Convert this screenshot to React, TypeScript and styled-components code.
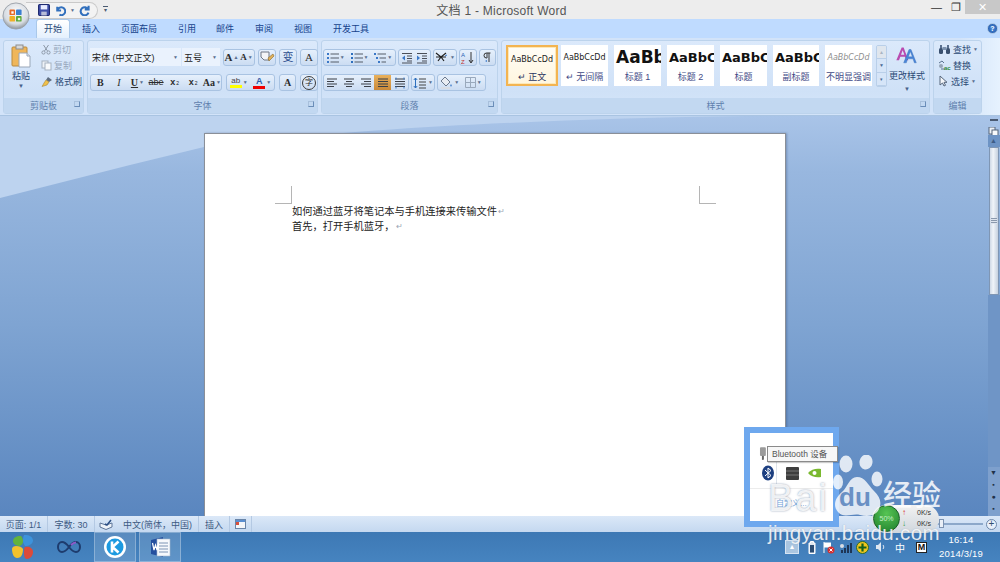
import React from 'react';
import styled, { createGlobalStyle } from 'styled-components';

const Global = createGlobalStyle`
  html, body { margin: 0; padding: 0; width: 1000px; height: 562px; overflow: hidden; }
  body { font-family: "Liberation Sans", "Noto Sans CJK SC", sans-serif; }
  * { box-sizing: border-box; }
`;

const Screen = styled.div`position: relative; width: 1000px; height: 562px; overflow: hidden; display: flex; flex-direction: column;`;
const TitleBar = styled.div`height: 19px; background: #ededed; display: grid; grid-template-columns: 1fr auto 1fr; align-items: center;`;
const Qat = styled.div`display: flex; align-items: center; height: 17px; margin: 1px 0 0 26px; padding-left: 12px; gap: 4px; width: 72px; border: 1px solid #c9c9c9; border-left: 0; border-radius: 0 10px 10px 0; background: #f3f3f3;`;
const QatMore = styled.span`width: 5px; margin-left: 5px; border-top: 1px solid #4a5a70; font-size: 6px; color: #4a5a70; line-height: 7px; text-align: center;`;
const QatWrap = styled.div`display: flex; align-items: center;`;
const Title = styled.div`font-size: 12px; color: #555; letter-spacing: .25px; padding-left: 3px;`;
const WinBtns = styled.div`display: flex; justify-content: flex-end; align-items: flex-start; height: 19px;`;
const WinBtn = styled.div<{ $w: number; $close?: boolean }>`
  width: ${p => p.$w}px; height: 14px; display: flex; align-items: center; justify-content: center;
  background: ${p => (p.$close ? '#c8c8c8' : 'transparent')}; color: ${p => (p.$close ? '#fff' : '#333')}; font-size: 11px;`;

const TabBar = styled.div`height: 19px; background: #bfdbff; display: flex; align-items: flex-end; padding-left: 36px; position: relative;`;
const Tab = styled.div<{ $w: number; $on?: boolean }>`
  width: ${p => p.$w}px; height: ${p => (p.$on ? 19 : 18)}px; line-height: 18px; text-align: center; font-size: 9px; color: #15428b;
  ${p => p.$on ? 'background: linear-gradient(#fff, #e4f0fd); border: 1px solid #a9c8ea; border-bottom: 0; border-radius: 3px 3px 0 0; color:#2a4a78;' : ''}`;
const Help = styled.div`position: absolute; right: 2px; top: 4px; width: 11px; height: 11px; border-radius: 50%; background: radial-gradient(#4d8fe0, #1c4f9f); border: 1px solid #a8c4e4; color: #fff; font-size: 7px; line-height: 9px; text-align: center; font-weight: bold;`;

const Ribbon = styled.div`height: 78px; background: linear-gradient(90deg, #d2e3f9 0 96%, #e6f2fe 100%); display: flex; padding: 2px 0 2px 3px; gap: 3px; border-bottom: 1px solid #a9c4e2;`;
const Group = styled.div<{ $w: number }>`
  width: ${p => p.$w}px; height: 74px; display: flex; flex-direction: column; border: 1px solid #bcd3ec; border-radius: 3px;
  background: linear-gradient(#dbe9fb, #cfe1f7 70%, #d6e6fa); position: relative;`;
const GroupBody = styled.div`height: 58px; display: flex; position: relative;`;
const GroupLabel = styled.div`height: 15px; background: #c2d8f1; color: #5f80ad; font-size: 9px; line-height: 16px; text-align: center; position: relative;`;
const Launcher = styled.span`position: absolute; right: 3px; top: 3px; width: 6px; height: 6px; border: 1px solid #6a8db8; border-top-color: #a8c0dc; border-left-color: #a8c0dc;`;

const Stack = styled.div<{ $gap: number; $top: number; $left: number }>`display: flex; flex-direction: column; gap: ${p => p.$gap}px; padding: ${p => p.$top}px 0 0 ${p => p.$left}px;`;
const Row = styled.div<{ $gap?: number }>`display: flex; align-items: center; gap: ${p => p.$gap ?? 2}px;`;

const Paste = styled.div`width: 34px; padding-top: 3px; display: flex; flex-direction: column; align-items: center; font-size: 9px; line-height: 12px; color: #2b4a75; gap: 1px;`;
const Arrow = styled.span`font-size: 6px; color: #46618a; line-height: 1;`;
const SmallCmd = styled.div<{ $dim?: boolean }>`display: flex; align-items: center; gap: 2px; height: 16px; font-size: 9px; color: ${p => (p.$dim ? '#98a8bd' : '#2b4a75')}; white-space: nowrap;`;

const Combo = styled.div<{ $w: number }>`width: ${p => p.$w}px; height: 18px; background: #eaf2fd; display: flex; align-items: center; justify-content: space-between; padding: 0 3px 0 2px; font-size: 9px; color: #222; white-space: nowrap;`;
const ComboJoin = styled.div`display: flex; gap: 1px;`;
const BtnGroup = styled.div<{ $w: number }>`width: ${p => p.$w}px; height: 17px; border: 1px solid #a9c3e2; border-radius: 3px; background: linear-gradient(#e6f0fc, #cbdcf2); display: flex; align-items: center; justify-content: space-around; font-size: 10px; color: #222; overflow: hidden;`;
const Cell = styled.span<{ $on?: boolean }>`
  flex: 1; height: 100%; display: flex; align-items: center; justify-content: center; gap: 1px;
  ${p => p.$on ? 'background: linear-gradient(#e8b05c, #c9893a);' : ''}`;
const Letter = styled.span<{ $b?: boolean; $i?: boolean; $u?: boolean; $s?: boolean; $size?: number; $c?: string; $serif?: boolean }>`
  font-family: ${p => (p.$serif ? '"Liberation Serif", serif' : '"Liberation Sans", "Noto Sans CJK SC", sans-serif')};
  font-weight: ${p => (p.$b ? 700 : 400)}; font-style: ${p => (p.$i ? 'italic' : 'normal')};
  text-decoration: ${p => (p.$u ? 'underline' : p.$s ? 'line-through' : 'none')};
  font-size: ${p => p.$size ?? 10}px; color: ${p => p.$c ?? '#2c2c2c'}; line-height: 1;`;
const Circled = styled.span`width: 14px; height: 14px; border: 1px solid #3a3a3a; border-radius: 50%; font-size: 8px; line-height: 12px; text-align: center; color: #2c2c2c;`;
const Drop = styled.span`font-size: 5px; color: #5a6f8f; line-height: 1;`;
const Sub = styled.sub`font-size: 5px;`;
const Sup = styled.sup`font-size: 5px;`;
const ColorBar = styled.span<{ $c: string }>`display: block; width: 12px; height: 3px; background: ${p => p.$c};`;
const ColorIcon = styled.span`display: flex; flex-direction: column; align-items: center; line-height: 1;`;

const Gallery = styled.div`display: flex; padding: 4px 0 0 4px; gap: 0;`;
const StyleTile = styled.div<{ $w: number; $gap: number; $on?: boolean }>`
  width: ${p => p.$w}px; height: 41px; margin-right: ${p => p.$gap}px; background: #fff; display: flex; flex-direction: column; align-items: center; overflow: hidden;
  ${p => p.$on ? 'border: 2px solid #f3b451; box-shadow: inset 0 0 0 1px #fde8b8; background: linear-gradient(#fffdf6,#fff6df);' : ''}`;
const Sample = styled.div<{ $size: number; $b?: boolean; $i?: boolean; $c?: string }>`
  height: 25px; line-height: 25px; font-size: ${p => p.$size}px; font-weight: ${p => (p.$b ? 700 : 400)}; font-style: ${p => (p.$i ? 'italic' : 'normal')};
  color: ${p => p.$c ?? '#111'}; white-space: nowrap; font-family: "DejaVu Sans", sans-serif; width: 100%; overflow: hidden; text-align: ${p => (p.$b ? 'left' : 'center')}; padding-left: ${p => (p.$b ? 2 : 0)}px;`;
const StyleName = styled.div<{ $c?: string }>`font-size: 9px; line-height: 14px; color: ${p => p.$c ?? '#3f4a86'}; white-space: nowrap;`;
const Spin = styled.div`width: 11px; height: 42px; display: flex; flex-direction: column; border: 1px solid #b9cfe9; border-radius: 2px; margin-left: 4px; overflow: hidden;`;
const SpinBtn = styled.div<{ $dim?: boolean }>`flex: 1; display: flex; align-items: center; justify-content: center; font-size: 5px; color: ${p => (p.$dim ? '#aab5c3' : '#4a6a94')}; background: ${p => (p.$dim ? '#dfe6ee' : '#d6e5f8')}; border-bottom: 1px solid #b9cfe9;`;
const BigCmd = styled.div`width: 40px; display: flex; flex-direction: column; align-items: center; gap: 4px; font-size: 9px; color: #2b4a75; white-space: nowrap; line-height: 12px;`;

const EditRow = styled.div`display: flex; align-items: center; gap: 2px; height: 16px; font-size: 9px; color: #2b4a75; white-space: nowrap;`;

const DocArea = styled.div`flex: 1; position: relative; display: flex; padding-left: 204px; overflow: hidden; background: linear-gradient(#a9c4e8 0, #98b7df 14%, #7fa4d2 52%, #5a86bf 100%);`;
const Swoosh = styled.svg`position: absolute; left: 0; top: 0; width: 1000px; height: 400px;`;
const Page = styled.div`position: relative; width: 582px; height: 400px; margin-top: 17px; background: #fff; border: 1px solid #8a8f98; border-bottom: 0; padding: 69px 0 0 87px; box-shadow: 1px 0 2px rgba(40,60,100,.35);`;
const Line = styled.div`font-family: "Noto Sans CJK SC", sans-serif; font-size: 10.25px; line-height: 15px; height: 15px; color: #222; white-space: nowrap; display: flex; align-items: center;`;
const Para = styled.span`color: #9aa5b5; font-size: 8px; margin-left: 1px;`;
const Crop = styled.span<{ $x: number }>`position: absolute; top: 52px; left: ${p => p.$x}px; width: 17px; height: 18px; border: 0 solid #b5b5b5;`;
const CropL = styled(Crop)`border-right-width: 1px; border-bottom-width: 1px;`;
const CropR = styled(Crop)`border-left-width: 1px; border-bottom-width: 1px;`;

const Scroll = styled.div`position: absolute; right: 0; top: 0; width: 13px; height: 400px; display: flex; flex-direction: column; align-items: center;`;
const Ruler = styled.div`width: 8px; height: 2px; background: #4a5a72; margin-top: 3px;`;
const RulerIcon = styled.div`width: 11px; height: 10px; margin-top: 2px;`;
const ScrollTop = styled.div`width: 12px; height: 12px; margin-top: 2px; background: #6d93c4; color: #3e5c86; font-size: 7px; text-align: center; line-height: 12px;`;
const Thumb = styled.div`width: 10px; height: 148px; border: 1px solid #7f96b4; background: linear-gradient(90deg, #cfd9e6, #f0f4f9 40%, #c5d0de); display: flex; align-items: center; justify-content: center;`;
const Grip = styled.div`width: 6px; height: 6px; background: repeating-linear-gradient(#8a98ac 0 1px, #dde4ee 1px 2px);`;
const Track = styled.div`flex: 1; width: 12px; background: #6f95c6;`;
const ScrollFoot = styled.div`width: 12px; display: flex; flex-direction: column; align-items: center; font-size: 7px; color: #22324a; line-height: 12px; background: #7ea0cd; padding-bottom: 1px;`;

const Status = styled.div`height: 16px; background: linear-gradient(#dbe8f8, #c4d8f0); display: flex; align-items: center; font-size: 9px; color: #3d5a83; position: relative;`;
const StatusCell = styled.div<{ $w: number; $plain?: boolean }>`width: ${p => p.$w}px; height: 100%; display: flex; align-items: center; justify-content: center; border-right: ${p => (p.$plain ? 0 : 1)}px solid #b4c9e3; white-space: nowrap;`;
const StatusSpacer = styled.div`flex: 1;`;
const Zoom = styled.div`width: 46px; height: 2px; background: #8ca8ca; margin-right: 3px; position: relative;`;
const ZoomThumb = styled.span`position: absolute; left: 2px; top: -4px; width: 5px; height: 9px; background: #e9eff7; border: 1px solid #7c93b2;`;
const ZoomPlus = styled.div`width: 11px; height: 11px; margin-right: 3px; border-radius: 50%; border: 1px solid #6d88ab; background: #e8f0fa; font-size: 10px; line-height: 8px; text-align: center; color: #33506f;`;

const Taskbar = styled.div`height: 30px; background: linear-gradient(#3d78b4, #4684c0); display: flex; align-items: center; position: relative;`;
const StartBox = styled.div`width: 44px; display: flex; justify-content: center;`;
const TaskItem = styled.div<{ $w: number; $open?: boolean }>`
  width: ${p => p.$w}px; height: 30px; margin-right: ${p => (p.$open ? 3 : 0)}px; display: flex; align-items: center; justify-content: center;
  ${p => p.$open ? 'background: rgba(255,255,255,.14); border: 1px solid rgba(255,255,255,.28);' : ''}`;
const Tray = styled.div`margin-left: auto; display: flex; align-items: center; height: 30px; padding-right: 10px;`;
const TrayUp = styled.div`width: 14px; height: 14px; margin-right: 4px; background: rgba(255,255,255,.55); border: 1px solid #d6e4f3; font-size: 7px; line-height: 11px; text-align: center; color: #fff;`;
const TrayIcon = styled.div<{ $w: number }>`width: ${p => p.$w}px; display: flex; justify-content: center; align-items: center; color: #fff; font-size: 10px;`;
const MBadge = styled.span`width: 11px; height: 11px; background: #fff; color: #111; border: 1px solid #222; font-size: 9px; line-height: 9px; text-align: center; font-weight: 700;`;
const Clock = styled.div`width: 58px; text-align: center; color: #fff; font-size: 9.5px; line-height: 14px; letter-spacing: .2px;`;

const Popup = styled.div`position: absolute; left: 744px; top: 427px; width: 95px; height: 100px; border: 6px solid #6ea8ee; background: #fff; padding: 11px 0 0 9px;`;
const PopRow = styled.div<{ $h: number }>`display: flex; align-items: center; gap: 9px; height: ${p => p.$h}px;`;
const PopCell = styled.div<{ $line?: boolean }>`width: 18px; height: 22px; display: flex; align-items: center; justify-content: center; border-right: ${p => (p.$line ? 1 : 0)}px solid #dde3ea;`;
const PopDot = styled.span`width: 9px; height: 9px; border-radius: 50%; background: #3d9ad8;`;
const PopLink = styled.div`margin: 4px 0 0 -9px; border-top: 1px solid #ececec; padding: 8px 0 0 26px; font-size: 8px; color: #6f9fd8;`;
const Tip = styled.div`position: absolute; left: 767px; top: 446px; width: 71px; height: 16px; background: #f7f7f7; border: 1px solid #8a8a8a; font-size: 8.5px; line-height: 14px; padding-left: 4px; color: #555; white-space: nowrap; box-shadow: 1px 1px 1px rgba(0,0,0,.2);`;
const OrbWrap = styled.div`position: absolute; left: 2px; top: 2px; width: 30px; height: 30px;`;

const Speed = styled.div`position: absolute; left: 872px; top: 505px; width: 67px; height: 28px; border-radius: 14px; background: linear-gradient(#f2f2f2, #cfd6dd); font-size: 7px; color: #333;`;
const SpeedOrb = styled.div`position: absolute; left: 1px; top: 0; width: 27px; height: 27px; border-radius: 50%; background: radial-gradient(circle at 50% 30%, #56c453, #1e7f2c); border: 1px solid #1a5f26; color: #c4f0c4; font-size: 7px; line-height: 25px; text-align: center;`;
const SpeedText = styled.div<{ $t: number; $c: string }>`position: absolute; left: 30px; top: ${p => p.$t}px; display: flex; gap: 11px; line-height: 10px; & b { color: ${p => p.$c}; font-size: 8px; }`;

const Watermark = styled.div`position: absolute; left: 768px; top: 455px; width: 232px; height: 107px; pointer-events: none; color: rgba(255,255,255,.85);`;
const WmTop = styled.div`display: flex; align-items: flex-end; height: 65px;`;
const WmBai = styled.span`width: 65px; font-family: "Liberation Sans", sans-serif; font-size: 38px; line-height: 44px; letter-spacing: 2px; text-shadow: 0 0 2px rgba(100,120,150,.75);`;
const WmPaw = styled.span`position: relative; width: 50px; height: 65px; display: block; flex: none;`;
const WmDu = styled.span`position: absolute; left: 6px; top: 28px; font-family: "Liberation Sans", sans-serif; font-size: 26px; line-height: 28px; font-weight: 700; color: #6a90c4;`;
const WmJing = styled.span`font-family: "Noto Sans CJK SC", sans-serif; font-size: 29px; line-height: 38px; margin: 0 0 8px 0; white-space: nowrap; font-weight: 500;`;
const WmUrl = styled.div`font-family: "Liberation Sans", sans-serif; font-size: 20.5px; line-height: 22px; letter-spacing: .4px; margin-top: 2px; color: rgba(255,255,255,.85); text-shadow: 0 0 1px rgba(100,120,150,.5);`;

/* ---- drawings ---- */
const Save = () => (<svg width="12" height="12" viewBox="0 0 11 11"><rect x=".5" y=".5" width="10" height="10" rx="1" fill="#3f4fa8" stroke="#1f2a70" /><rect x="2.5" y="1" width="6" height="4" fill="#e8ecff" /><rect x="3" y="7" width="5" height="3.5" fill="#b8bdd8" /></svg>);
const Undo = () => (<svg width="12" height="12" viewBox="0 0 11 11"><path d="M3 2.5V6h3.500M3.300 5.500A3.600 3.600 0 1 1 5 9.800" fill="none" stroke="#3270bd" strokeWidth="1.900" /></svg>);
const Redo = () => (<svg width="12" height="12" viewBox="0 0 11 11"><path d="M8.800 1.500v3.500H5.300M8.500 5A3.700 3.700 0 1 0 8.700 8" fill="none" stroke="#3270bd" strokeWidth="1.900" /></svg>);
const OfficeOrb = () => (<svg width="28" height="28" viewBox="0 0 30 30"><defs><radialGradient id="orb" cx="50%" cy="35%" r="65%"><stop offset="0" stopColor="#fbfbfb" /><stop offset=".7" stopColor="#d7dce2" /><stop offset="1" stopColor="#8d949c" /></radialGradient></defs><circle cx="15" cy="15" r="14" fill="url(#orb)" stroke="#9aa0a8" /><rect x="8" y="8" width="6" height="6" rx="1" fill="#e4682a" /><rect x="15" y="8" width="6" height="6" rx="1" fill="#3b7fd0" /><rect x="8" y="15" width="6" height="6" rx="1" fill="#f0b028" /><rect x="15" y="15" width="6" height="6" rx="1" fill="#5aa83a" /><rect x="10" y="10" width="2.5" height="2.5" fill="#fff" /><rect x="17" y="17" width="2.5" height="2.5" fill="#e8f8e0" /></svg>);
const PasteIcon = () => (<svg width="20" height="25" viewBox="0 0 20 25"><rect x="1" y="3" width="15" height="19" rx="1" fill="#efb65a" stroke="#b98a3e" /><rect x="5" y="1" width="7" height="4" fill="#d8d8d8" stroke="#8d8d8d" /><path d="M8 9h8l3 3v11H8z" fill="#fff" stroke="#9aa7b8" /><path d="M16 9v3h3" fill="#dfe6ef" stroke="#9aa7b8" /></svg>);
const Cut = () => (<svg width="10" height="11" viewBox="0 0 10 11"><path d="M2.500 1l4 6M7.500 1l-4 6" stroke="#8d99a8" strokeWidth="1" /><circle cx="2.500" cy="8.500" r="1.600" fill="none" stroke="#8d99a8" /><circle cx="7.500" cy="8.500" r="1.600" fill="none" stroke="#8d99a8" /></svg>);
const Copy = () => (<svg width="11" height="11" viewBox="0 0 11 11"><rect x="1" y="1" width="6" height="7" fill="#eef2f7" stroke="#a5b1c0" /><rect x="4" y="3" width="6" height="7" fill="#f8fafc" stroke="#a5b1c0" /></svg>);
const Brush = () => (<svg width="12" height="11" viewBox="0 0 12 11"><path d="M7 1l4 3-3 2-3-2z" fill="#5e6d80" /><path d="M5 4l3 2-2 3-5 1.500L3 7z" fill="#f0c04a" stroke="#9b7a2a" strokeWidth=".5" /></svg>);
const Lines = ({ kind }: { kind: 'l' | 'c' | 'r' | 'j' | 'd' }) => {
  const rows = [2, 4.5, 7, 9.5];
  const xs: Record<string, [number, number][]> = {
    l: [[1, 11], [1, 8], [1, 11], [1, 8]], c: [[1, 11], [3, 9], [1, 11], [3, 9]], r: [[1, 11], [4, 11], [1, 11], [4, 11]], j: [[1, 11], [1, 11], [1, 11], [1, 11]], d: [[1, 11], [1, 11], [1, 11], [1, 11]],
  };
  return (<svg width="12" height="12" viewBox="0 0 12 12">{rows.map((y, i) => <path key={i} d={`M${xs[kind][i][0]} ${y}H${xs[kind][i][1]}`} stroke="#3b3f47" strokeWidth="1.200" />)}{kind === 'd' && <path d="M2 .5v2M10 .5v2M2 9.500v2M10 9.500v2" stroke="#3a78c8" />}</svg>);
};
const ListIcon = ({ kind }: { kind: 'b' | 'n' | 'm' }) => (<svg width="12" height="12" viewBox="0 0 12 12">{[2, 6, 10].map((y, i) => (<g key={y}><rect x={kind === 'm' ? i * 2 : 0} y={y - 1} width="2" height="2" fill={kind === 'n' ? '#2d6fbd' : '#3a78c8'} /><path d={`M${(kind === 'm' ? i * 2 : 0) + 3.5} ${y}H12`} stroke="#555d68" /></g>))}</svg>);
const IndentIcon = ({ flip }: { flip?: boolean }) => (<svg width="12" height="12" viewBox="0 0 12 12"><g stroke="#4a4f58"><path d="M1 1.500h10M6 4h5M6 6.500h5M6 9h5M1 11h10" /></g><path d={flip ? 'M1 6l3-2.500v5z' : 'M4 6L1 3.500v5z'} fill="#3a78c8" /></svg>);
const Chinese = () => (<svg width="13" height="11" viewBox="0 0 13 11"><path d="M1 1l5 4 5-4M3 9l3-4 3 4M1 5h10" fill="none" stroke="#222" strokeWidth="1.200" /><path d="M12 3l-2 1" stroke="#3a78c8" /></svg>);
const Sort = () => (<svg width="14" height="13" viewBox="0 0 14 13"><text x="0" y="6" fontSize="6" fill="#2b62b5" fontFamily="Liberation Sans">A</text><text x="0" y="12.500" fontSize="6" fill="#c03030" fontFamily="Liberation Sans">Z</text><path d="M10 1v10M8 9l2 3 2-3" fill="none" stroke="#333" /></svg>);
const Pilcrow = () => (<svg width="10" height="11" viewBox="0 0 10 11"><path d="M6 1v9M4 1v5M7.500 1H3.500a2 2 0 0 0 0 5H4" fill="none" stroke="#333" /><path d="M2 9l2-1v2z" fill="#3a78c8" /></svg>);
const LineSp = () => (<svg width="13" height="12" viewBox="0 0 13 12"><path d="M2.500 1v10M.8 3l1.700-2 1.700 2M.8 9l1.700 2 1.700-2" fill="none" stroke="#2d6fbd" /><path d="M6 2h7M6 5h7M6 8h7M6 11h7" stroke="#444" /></svg>);
const Bucket = () => (<svg width="13" height="13" viewBox="0 0 13 13"><path d="M5 1l5 5-4 4-5-5z" fill="#e8ecf2" stroke="#6c7a8e" /><path d="M11 8c1 1.300 1 2.300 0 2.500-1-.2-1-1.200 0-2.500z" fill="#3a78c8" /><rect x="1" y="11" width="9" height="2" fill="#d8dde4" /></svg>);
const Borders = () => (<svg width="11" height="11" viewBox="0 0 11 11"><path d="M.5.5h10v10H.5zM5.500.5v10M.5 5.500h10" fill="none" stroke="#9aa9bc" /></svg>);
const Eraser = () => (<svg width="15" height="13" viewBox="0 0 15 13"><path d="M1 1h8v8H4L1 6z" fill="#f4f5f7" stroke="#6e7784" /><path d="M8 7l5-4 1 2-5 5z" fill="#e0b05a" stroke="#8a6a2a" strokeWidth=".6" /></svg>);
const StyleA = () => (<svg width="24" height="21" viewBox="0 0 36 28"><path d="M2 21L10 2h3l7 19h-3l-2-5H8l-2 5zM9 13h5l-2.500-7z" fill="#b94bb0" /><path d="M13 25L21 5h3l8 20h-3l-2-6h-8l-2 6zM20 16h6l-3-8z" fill="#4a86d8" stroke="#2c62ad" strokeWidth=".5" /></svg>);
const Find = () => (<svg width="13" height="11" viewBox="0 0 13 11"><rect x="1" y="4" width="4" height="6" rx="1.500" fill="#39506f" /><rect x="8" y="4" width="4" height="6" rx="1.500" fill="#39506f" /><rect x="4.500" y="3" width="4" height="3" fill="#7d93b0" /><rect x="2" y="1" width="2" height="3" fill="#586f8f" /><rect x="9" y="1" width="2" height="3" fill="#586f8f" /></svg>);
const Replace = () => (<svg width="13" height="11" viewBox="0 0 13 11"><path d="M1 3l3-2 2 2M3 9h4" fill="none" stroke="#5a7290" /><circle cx="3" cy="6" r="2" fill="#95a5b8" /><text x="6" y="10" fontSize="6" fill="#2e8a3c" fontFamily="Liberation Sans" fontWeight="700">ac</text></svg>);
const Cursor = () => (<svg width="11" height="12" viewBox="0 0 11 12"><path d="M2 1v9l2.500-2 1.500 3 1.500-.7-1.500-3h3z" fill="#f4f6f9" stroke="#55657b" /></svg>);
const Proof = () => (<svg width="14" height="11" viewBox="0 0 14 11"><path d="M1 4l6 2 6-2v4l-6 2.500L1 8z" fill="#eef3f9" stroke="#5e7699" /><path d="M6 5l2 1 4-5" fill="none" stroke="#2c4f85" strokeWidth="1.500" /></svg>);
const MiniPic = () => (<svg width="11" height="10" viewBox="0 0 11 10"><rect x=".5" y=".5" width="10" height="9" fill="#f4f6f9" stroke="#6a85a8" /><rect x="1" y="1" width="9" height="2" fill="#5b8fd0" /><rect x="1" y="3" width="3" height="3" fill="#d8503c" /></svg>);
const Start = () => (<svg width="23" height="24" viewBox="0 0 23 24"><path d="M10 1C5 .5 2 3 2 6s3 5 7 5c2-1 3-3 3-5s-1-4-2-5z" fill="#62b33d" /><path d="M13 0c5-.5 9 2 9 5.500S18 11 14 11c-1-2-2-3-2-5s0-4 1-6z" fill="#3d93dc" /><path d="M1 14c0-2 2-3 4-3 3 0 6 1 7 3 0 4-1 9-6 9-3 0-5-4-5-9z" fill="#f3c22e" /><path d="M14 12c4-1 8 1 8 5s-3 7-6 7c-2 0-3-2-3-6 0-3 0-5 1-6z" fill="#dc4b3a" /></svg>);
const Infinity_ = () => (<svg width="24" height="12" viewBox="0 0 24 12"><path d="M12 6C9 2 7 1 5 1 2.500 1 1 3.500 1 6s1.500 5 4 5c2 0 4-1 7-5zm0 0c3-4 5-5 7-5 2.500 0 4 2.500 4 5s-1.500 5-4 5c-2 0-4-1-7-5z" fill="none" stroke="#1e3c6e" strokeWidth="2" /><path d="M14 4c2-2 4-2.500 5-2.500" fill="none" stroke="#8c5bc8" strokeWidth="2" /></svg>);
const KIcon = () => (<svg width="24" height="24" viewBox="0 0 24 24"><circle cx="12" cy="12" r="11" fill="#fff" /><circle cx="12" cy="12" r="8.500" fill="#1d9ae0" /><path d="M9 6.500v11M15.500 6.500L9.500 12l6 5.500" fill="none" stroke="#fff" strokeWidth="2.600" /></svg>);
const WordIcon = () => (<svg width="22" height="22" viewBox="0 0 22 22"><path d="M2 4l12-3v20L2 18z" fill="#25509f" /><path d="M8 3h13v17H8z" fill="#f7f9fc" stroke="#a9b8cc" strokeWidth=".6" /><path d="M10 7h9M10 10h9M10 13h9M10 16h9" stroke="#7d94b4" /><path d="M3.500 7l1.500 7 1.500-5 1.500 5 1.500-7" fill="none" stroke="#fff" strokeWidth="1.200" /></svg>);
const Battery = () => (<svg width="8" height="13" viewBox="0 0 8 13"><path d="M2.500.5h3v1.500h1.500v10.500H1V2h1.500z" fill="#dfe6ee" stroke="#fff" /><rect x="2" y="4" width="4" height="7.500" fill="#2b4d74" /></svg>);
const Flag = () => (<svg width="13" height="13" viewBox="0 0 13 13"><path d="M2 1v11" stroke="#fff" /><path d="M2 1.500h7v5H2z" fill="#fff" /><circle cx="9" cy="9" r="3.500" fill="#d62f2f" /><path d="M7.500 7.500l3 3m0-3l-3 3" stroke="#fff" /></svg>);
const Net = () => (<svg width="13" height="13" viewBox="0 0 13 13"><path d="M2 9h2v3H2zM5 7h2v5H5zM8 4h2v8H8zM11 2h2v10h-2z" fill="#1e3555" /><circle cx="3" cy="5" r="2" fill="#d8dde4" /></svg>);
const Plus360 = () => (<svg width="13" height="13" viewBox="0 0 13 13"><circle cx="6.500" cy="6.500" r="6" fill="#efc51e" stroke="#2a6a2a" /><path d="M6.500 2.500v8M2.500 6.500h8" stroke="#14601e" strokeWidth="2.200" /></svg>);
const Speaker = () => (<svg width="11" height="12" viewBox="0 0 11 12"><path d="M1 4h2l3-3v10L3 8H1z" fill="#dfe7f1" /><path d="M8 4c1 1.300 1 2.700 0 4" fill="none" stroke="#dfe7f1" /></svg>);
const Bt = () => (<svg width="14" height="16" viewBox="0 0 14 16"><ellipse cx="7" cy="8" rx="6" ry="7.500" fill="#1d3f80" /><path d="M4 5l6 5.500L7 13V3l3 2.500L4 11" fill="none" stroke="#fff" /></svg>);
const Chip = () => (<svg width="13" height="13" viewBox="0 0 13 13"><rect width="13" height="13" rx="1" fill="#3e3e3e" /><path d="M0 4h13M0 8h13" stroke="#777" /></svg>);
const Nv = () => (<svg width="13" height="10" viewBox="0 0 13 10"><path d="M0 5c3-4 9-5 13-4v8C9 10 3 9 0 5z" fill="#7ab92f" /><circle cx="6.500" cy="5" r="2" fill="#fff" /></svg>);
const Pen = () => (<svg width="8" height="13" viewBox="0 0 8 13"><rect x="1" y="0" width="6" height="9" rx="1" fill="#9a9a9a" /><path d="M3 9h2v4H3z" fill="#666" /></svg>);
const Paw = () => (<svg width="50" height="65" viewBox="0 0 50 65"><g fill="rgba(255,255,255,.8)"><ellipse cx="13" cy="9" rx="6.500" ry="8.500" /><ellipse cx="33" cy="7" rx="6.500" ry="7.500" transform="rotate(10 33 7)" /><ellipse cx="44" cy="24" rx="5.500" ry="7.500" /><ellipse cx="5" cy="27" rx="5" ry="7.500" /><path d="M24 22c8 0 11 8 17 14s8 11 5 18-11 8-19 6-16 4-22-3-2-15 4-20 7-15 15-15z" /></g></svg>);

const tabs: [string, number][] = [['插入', 42], ['页面布局', 54], ['引用', 42], ['邮件', 34], ['审阅', 44], ['视图', 34], ['开发工具', 62]];
const gallery = [
  { s: 'AaBbCcDd', z: 8, n: '↵ 正文', w: 52, g: 3, on: true, c: '#222' },
  { s: 'AaBbCcDd', z: 8, n: '↵ 无间隔', w: 47, g: 6, c: '#222' },
  { s: 'AaBb', z: 17, b: true, n: '标题 1', w: 47, g: 6 },
  { s: 'AaBbC', z: 13, b: true, n: '标题 2', w: 47, g: 6 },
  { s: 'AaBbC', z: 13, b: true, n: '标题', w: 47, g: 6 },
  { s: 'AaBbC', z: 13, b: true, n: '副标题', w: 46, g: 6 },
  { s: 'AaBbCcDd', z: 8, i: true, tone: '#8f8f8f', n: '不明显强调', w: 47, g: 0 },
];

export default function App() {
  return (
    <Screen>
      <Global />
      <TitleBar>
        <QatWrap>
          <Qat><Save /><Undo /><Drop>▼</Drop><Redo /></Qat>
          <QatMore>▾</QatMore>
        </QatWrap>
        <Title>文档 1 - Microsoft Word</Title>
        <WinBtns>
          <WinBtn $w={19}>—</WinBtn>
          <WinBtn $w={19}>❐</WinBtn>
          <WinBtn $w={35} $close>✕</WinBtn>
        </WinBtns>
      </TitleBar>
      <TabBar>
        <Tab $w={34} $on>开始</Tab>
        {tabs.map(([t, w]) => <Tab key={t} $w={w}>{t}</Tab>)}
        <Help>?</Help>
      </TabBar>
      <Ribbon>
        <Group $w={81}>
          <GroupBody>
            <Paste><PasteIcon />粘贴<Arrow>▼</Arrow></Paste>
            <Stack $gap={0} $top={0} $left={3}>
              <SmallCmd $dim><Cut />剪切</SmallCmd>
              <SmallCmd $dim><Copy />复制</SmallCmd>
              <SmallCmd><Brush />格式刷</SmallCmd>
            </Stack>
          </GroupBody>
          <GroupLabel>剪贴板<Launcher /></GroupLabel>
        </Group>
        <Group $w={231}>
          <GroupBody>
            <Stack $gap={8} $top={7} $left={2}>
              <Row $gap={3}>
                <ComboJoin>
                  <Combo $w={91}>宋体 (中文正文)<Drop>▼</Drop></Combo>
                  <Combo $w={38}>五号<Drop>▼</Drop></Combo>
                </ComboJoin>
                <BtnGroup $w={32}><Cell><Letter $b $serif $size={11}>A</Letter><Drop>▲</Drop></Cell><Cell><Letter $b $serif $size={9}>A</Letter><Drop>▼</Drop></Cell></BtnGroup>
                <BtnGroup $w={18}><Eraser /></BtnGroup>
                <BtnGroup $w={18}><Letter $size={11} $c="#2d4f8f">变</Letter></BtnGroup>
                <BtnGroup $w={18}><Letter $serif $size={11}>A</Letter></BtnGroup>
              </Row>
              <Row $gap={4}>
                <BtnGroup $w={132}>
                  <Cell><Letter $b $serif>B</Letter></Cell>
                  <Cell><Letter $i $serif>I</Letter></Cell>
                  <Cell><Letter $u $b $serif>U</Letter><Drop>▼</Drop></Cell>
                  <Cell><Letter $s $size={9}>abe</Letter></Cell>
                  <Cell><Letter $b $size={9}>x</Letter><Sub>2</Sub></Cell>
                  <Cell><Letter $b $size={9}>x</Letter><Sup>2</Sup></Cell>
                  <Cell><Letter $b $serif $size={10}>Aa</Letter><Drop>▼</Drop></Cell>
                </BtnGroup>
                <BtnGroup $w={49}>
                  <Cell><ColorIcon><Letter $size={8} $c="#444">ab</Letter><ColorBar $c="#ffff00" /></ColorIcon><Drop>▼</Drop></Cell>
                  <Cell><ColorIcon><Letter $b $size={9} $c="#2a5aa8">A</Letter><ColorBar $c="#f00000" /></ColorIcon><Drop>▼</Drop></Cell>
                </BtnGroup>
                <BtnGroup $w={17}><Letter $b $serif $size={10}>A</Letter></BtnGroup>
                <BtnGroup $w={18}><Circled>字</Circled></BtnGroup>
              </Row>
            </Stack>
          </GroupBody>
          <GroupLabel>字体<Launcher /></GroupLabel>
        </Group>
        <Group $w={177}>
          <GroupBody>
            <Stack $gap={8} $top={8} $left={1}>
              <Row>
                <BtnGroup $w={73}><Cell><ListIcon kind="b" /><Drop>▼</Drop></Cell><Cell><ListIcon kind="n" /><Drop>▼</Drop></Cell><Cell><ListIcon kind="m" /><Drop>▼</Drop></Cell></BtnGroup>
                <BtnGroup $w={33}><Cell><IndentIcon flip /></Cell><Cell><IndentIcon /></Cell></BtnGroup>
                <BtnGroup $w={24}><Chinese /><Drop>▼</Drop></BtnGroup>
                <BtnGroup $w={18}><Sort /></BtnGroup>
                <BtnGroup $w={17}><Pilcrow /></BtnGroup>
              </Row>
              <Row>
                <BtnGroup $w={86}>
                  <Cell><Lines kind="l" /></Cell><Cell><Lines kind="c" /></Cell><Cell><Lines kind="r" /></Cell><Cell $on><Lines kind="j" /></Cell><Cell><Lines kind="d" /></Cell>
                </BtnGroup>
                <BtnGroup $w={24}><LineSp /><Drop>▼</Drop></BtnGroup>
                <BtnGroup $w={49}><Cell><Bucket /><Drop>▼</Drop></Cell><Cell><Borders /><Drop>▼</Drop></Cell></BtnGroup>
              </Row>
            </Stack>
          </GroupBody>
          <GroupLabel>段落<Launcher /></GroupLabel>
        </Group>
        <Group $w={429}>
          <GroupBody>
            <Gallery>
              {gallery.map(g => (
                <StyleTile key={g.n} $w={g.w} $gap={g.g} $on={g.on}>
                  <Sample $size={g.z} $b={g.b} $i={g.i} $c={g.tone ?? g.c}>{g.s}</Sample>
                  <StyleName $c={g.on ? '#2b3560' : undefined}>{g.n}</StyleName>
                </StyleTile>
              ))}
              <Spin><SpinBtn $dim>▲</SpinBtn><SpinBtn>▼</SpinBtn><SpinBtn>▾</SpinBtn></Spin>
              <BigCmd><StyleA />更改样式<Arrow>▼</Arrow></BigCmd>
            </Gallery>
          </GroupBody>
          <GroupLabel>样式<Launcher /></GroupLabel>
        </Group>
        <Group $w={49}>
          <GroupBody>
            <Stack $gap={0} $top={0} $left={4}>
              <EditRow><Find />查找<Drop>▼</Drop></EditRow>
              <EditRow><Replace />替换</EditRow>
              <EditRow><Cursor />选择<Drop>▼</Drop></EditRow>
            </Stack>
          </GroupBody>
          <GroupLabel>编辑</GroupLabel>
        </Group>
      </Ribbon>
      <DocArea>
        <Swoosh viewBox="0 0 1000 400"><path d="M0 82 L130 49 L204 31 C 400 6 700 -4 1000 0 V0 H0Z" fill="#bdd3ef" /></Swoosh>
        <Page>
          <CropL $x={70} />
          <CropR $x={494} />
          <Line>如何通过蓝牙将笔记本与手机连接来传输文件<Para>↵</Para></Line>
          <Line>首先，打开手机蓝牙，<Para>↵</Para></Line>
        </Page>
        <Scroll>
          <Ruler />
          <RulerIcon><svg width="11" height="10" viewBox="0 0 11 10"><rect x="1" y="0" width="6" height="7" fill="#eef2f7" stroke="#55657b" /><rect x="4" y="3" width="6" height="6" fill="#f8fafc" stroke="#55657b" /></svg></RulerIcon>
          <ScrollTop>▲</ScrollTop>
          <Thumb><Grip /></Thumb>
          <Track />
          <ScrollFoot><span>▼</span><span>▪</span><span>●</span><span>▪</span></ScrollFoot>
        </Scroll>
      </DocArea>
      <Status>
        <StatusCell $w={48}>页面: 1/1</StatusCell>
        <StatusCell $w={47}>字数: 30</StatusCell>
        <StatusCell $w={22} $plain><Proof /></StatusCell>
        <StatusCell $w={82}>中文(简体，中国)</StatusCell>
        <StatusCell $w={31}>插入</StatusCell>
        <StatusCell $w={22}><MiniPic /></StatusCell>
        <StatusSpacer />
        <Zoom><ZoomThumb /></Zoom>
        <ZoomPlus>+</ZoomPlus>
      </Status>
      <Taskbar>
        <StartBox><Start /></StartBox>
        <TaskItem $w={50}><Infinity_ /></TaskItem>
        <TaskItem $w={42} $open><KIcon /></TaskItem>
        <TaskItem $w={42} $open><WordIcon /></TaskItem>
        <Tray>
          <TrayUp>▲</TrayUp>
          <TrayIcon $w={17}><Battery /></TrayIcon>
          <TrayIcon $w={17}><Flag /></TrayIcon>
          <TrayIcon $w={17}><Net /></TrayIcon>
          <TrayIcon $w={17}><Plus360 /></TrayIcon>
          <TrayIcon $w={18}><Speaker /></TrayIcon>
          <TrayIcon $w={22}>中</TrayIcon>
          <TrayIcon $w={21}><MBadge>M</MBadge></TrayIcon>
          <Clock>16:14<br />2014/3/19</Clock>
        </Tray>
      </Taskbar>

      <OrbWrap><OfficeOrb /></OrbWrap>

      <Popup>
        <PopRow $h={18}><Pen /><PopCell /><Chip /><PopDot /></PopRow>
        <PopRow $h={22}><PopCell $line><Bt /></PopCell><Chip /><Nv /></PopRow>
        <PopLink>自定义...</PopLink>
      </Popup>
      <Tip>Bluetooth 设备</Tip>
      <Speed>
        <SpeedOrb>50%</SpeedOrb>
        <SpeedText $t={3} $c="#d62f2f"><b>↑</b><span>0K/s</span></SpeedText>
        <SpeedText $t={14} $c="#2e9a3c"><b>↓</b><span>0K/s</span></SpeedText>
      </Speed>
      <Watermark>
        <WmTop>
          <WmBai>Bai</WmBai>
          <WmPaw><Paw /><WmDu>du</WmDu></WmPaw>
          <WmJing>经验</WmJing>
        </WmTop>
        <WmUrl>jingyan.baidu.com</WmUrl>
      </Watermark>
    </Screen>
  );
}
